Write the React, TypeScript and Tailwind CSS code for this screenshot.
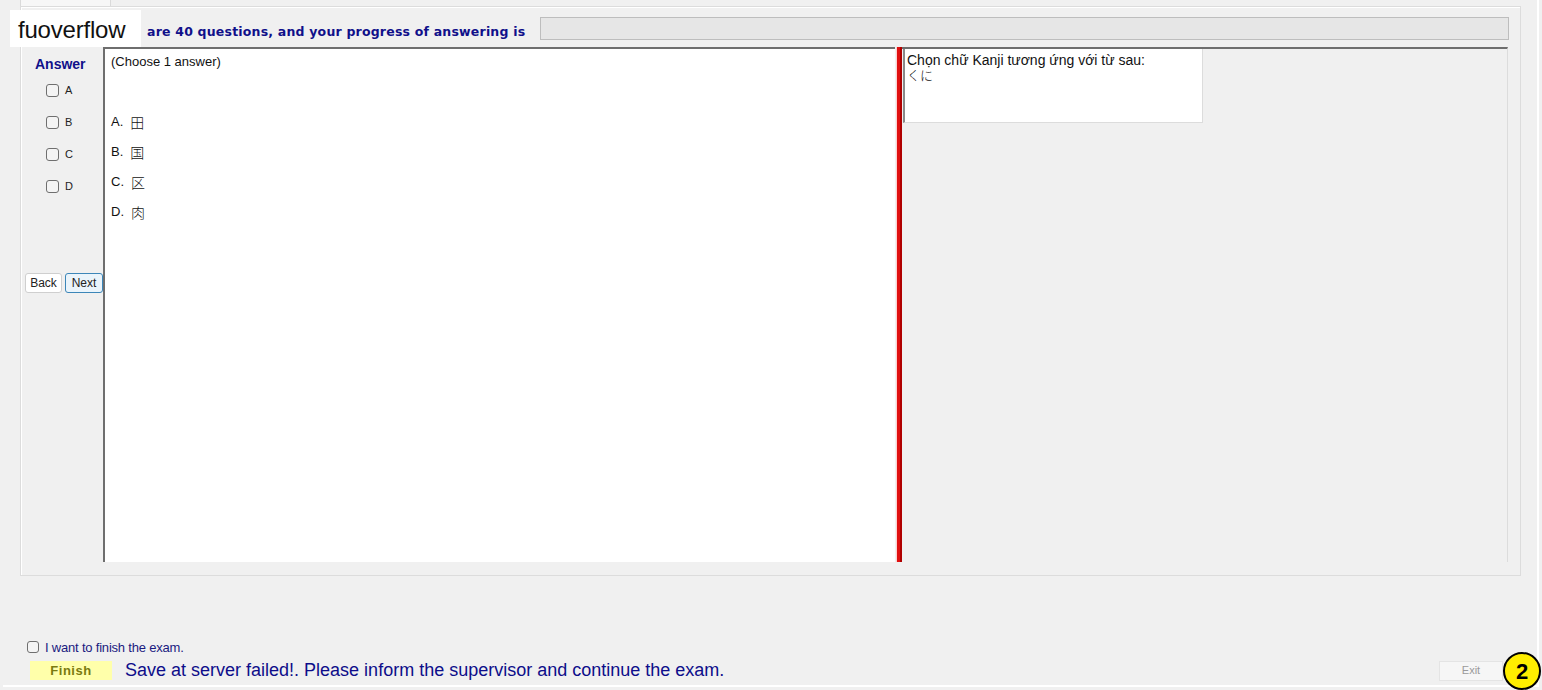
import { useState } from "react";

const OPTIONS = [
  { key: "A", kanji: "田" },
  { key: "B", kanji: "国" },
  { key: "C", kanji: "区" },
  { key: "D", kanji: "肉" },
];

export default function App() {
  const [picked, setPicked] = useState<string[]>([]);
  const [finish, setFinish] = useState(false);

  function toggle(k: string) {
    setPicked((p) => (p.includes(k) ? p.filter((x) => x !== k) : [...p, k]));
  }

  return (
    <div className="relative h-[690px] w-[1542px] overflow-hidden bg-[#f0f0f0] font-['Liberation_Sans',Arial,sans-serif] text-black">
      {/* Window frame */}
      <div className="ml-[3px] flex h-[687px] w-[1536px] flex-col border-r-2 border-b-2 border-white bg-[#f0f0f0]">
        {/* Tab strip */}
        <div className="flex h-[6px]">
          <div className="ml-[17px] w-[91px] border-x border-[#dadada] bg-[#f7f7f7]" />
        </div>

        {/* Group panel */}
        <div className="ml-[17px] flex h-[570px] w-[1501px] flex-col border border-[#dcdcdc] bg-[#f0f0f0] shadow-[inset_1px_1px_0_#ffffff]">
          {/* Header row */}
          <div className="flex h-[40px] items-center">
            <div className="w-[126px]" />
            <span className="mt-[10px] font-['DejaVu_Sans',Verdana,sans-serif] text-[12.5px] font-bold tracking-[0.2px] text-[#10108a]">
              are 40 questions, and your progress of answering is
            </span>
            <div className="ml-auto mr-[11px] mt-[2px] h-[23px] w-[969px] border border-[#bdbdbd] bg-[#e6e6e6]" />
          </div>

          {/* Content row */}
          <div className="flex h-[515px]">
            {/* Answer column */}
            <div className="flex w-[82px] flex-col items-center pl-[1px]">
              <div className="mt-[7px] self-start ml-[13px] text-[14px] font-bold text-[#10108a]">Answer</div>
              <div className="mt-[8px] flex flex-col gap-[17px] pr-[6px]">
                {OPTIONS.map((o) => (
                  <label key={o.key} className="flex h-[15px] items-center gap-[6px] text-[11px] text-[#222]">
                    <span
                      onClick={() => toggle(o.key)}
                      className={`block h-[13px] w-[13px] rounded-[3px] border border-[#6f6f6f] ${
                        picked.includes(o.key) ? "bg-[#cce4f7]" : "bg-[#f4f4f4]"
                      }`}
                    />
                    {o.key}
                  </label>
                ))}
              </div>
              <div className="mt-[79px] self-start ml-[3px] flex gap-[3px]">
                <button className="h-[20px] w-[37px] rounded-[3px] border border-[#cfcfcf] bg-white text-[12px] text-[#222]">
                  Back
                </button>
                <button className="h-[20px] w-[38px] rounded-[3px] border border-[#3c86b8] bg-[#eaf4fb] text-[12px] text-[#222]">
                  Next
                </button>
              </div>
            </div>

            {/* Question box */}
            <div className="w-[792px] border-t-2 border-l-2 border-[#6e6e6e] bg-white pl-[6px] pt-[3px]">
              <div className="text-[13px] text-[#111]">(Choose 1 answer)</div>
              <div className="mt-[41px] flex flex-col gap-[12px]">
                {OPTIONS.map((o) => (
                  <div key={o.key} className="flex h-[18px] items-center gap-[7px] text-[13px] text-[#111]">
                    <span>{o.key}.</span>
                    <span className="font-['Noto_Sans_CJK_JP',sans-serif] text-[14px] font-light leading-none">{o.kanji}</span>
                  </div>
                ))}
              </div>
            </div>

            {/* Splitter */}
            <div className="ml-[1px] w-[6px] border-l border-[#ffd0d0] bg-[#e01010] shadow-[inset_-2px_0_0_#b00000]" />

            {/* Right panel */}
            <div className="w-[606px] border-t-2 border-r border-[#6e6e6e] border-r-[#dcdcdc] bg-[#f0f0f0]">
              <div className="ml-[1px] h-[74px] w-[300px] border-l-2 border-b border-r border-[#8a8a8a] border-b-[#dcdcdc] border-r-[#dcdcdc] bg-white px-[2px] pt-[3px]">
                <div className="text-[14px] leading-[16px] text-[#111]">Chọn chữ Kanji tương ứng với từ sau:</div>
                <div className="font-['Noto_Sans_CJK_JP',sans-serif] text-[13px] font-light leading-[14px] text-[#111]">くに</div>
              </div>
            </div>
          </div>
        </div>

        {/* Bottom area */}
        <div className="mt-auto mb-[1px] flex flex-col">
          <label className="ml-[24px] flex items-center gap-[6px] text-[13px] tracking-[-0.2px] text-[#1a1a80]">
            <span
              onClick={() => setFinish(!finish)}
              className={`block h-[12px] w-[12px] rounded-[3px] border border-[#6f6f6f] ${finish ? "bg-[#cce4f7]" : "bg-[#f4f4f4]"}`}
            />
            I want to finish the exam.
          </label>
          <div className="flex items-center">
            <button className="ml-[27px] h-[19px] w-[82px] bg-[#ffffaa] text-[13px] font-bold tracking-[0.5px] text-[#7a7a10]">
              Finish
            </button>
            <span className="ml-[13px] text-[18px] text-[#0d0d8a]">
              Save at server failed!. Please inform the supervisor and continue the exam.
            </span>
            <button className="ml-auto mr-[34px] h-[20px] w-[64px] border border-[#e4e4e4] bg-[#f6f6f6] text-[11px] text-[#9a9a9a]">
              Exit
            </button>
          </div>
        </div>
      </div>

      {/* Watermark overlay */}
      <div className="absolute left-[10px] top-[10px] h-[37px] w-[131px] bg-white pl-[8px] pt-[8px] font-['Liberation_Sans',Arial,sans-serif] text-[24px] leading-none tracking-[-0.2px] text-[#111]">
        fuoverflow
      </div>

      {/* Badge */}
      <div className="absolute left-[1503px] top-[652px] flex h-[38px] w-[38px] items-center justify-center rounded-full border-2 border-black bg-[#ffee00] text-[22px] font-bold text-black">
        2
      </div>
    </div>
  );
}
